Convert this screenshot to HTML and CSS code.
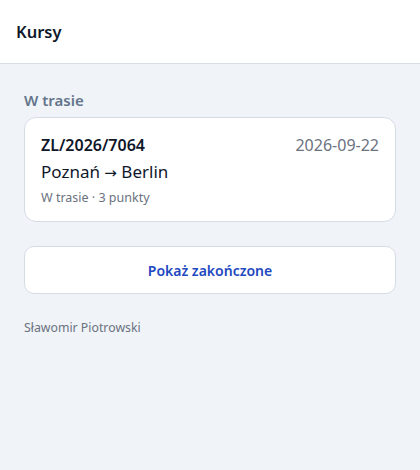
FILE: index.html
```html
<!DOCTYPE html>
<html lang="pl">
<head>
<meta charset="utf-8">
<link rel="stylesheet" href="styles.css">
</head>
<body>
<header class="topbar"><h1 class="title">Kursy</h1></header>
<main class="content">
  <h2 class="section-title">W trasie</h2>
  <div class="card">
    <div class="card-row">
      <span class="trip-id">ZL/2026/7064</span>
      <span class="trip-date">2026-09-22</span>
    </div>
    <div class="route">Poznań <span class="arrow">→</span> Berlin</div>
    <div class="meta">W trasie · 3 punkty</div>
  </div>
  <button class="show-btn">Pokaż zakończone</button>
  <p class="driver">Sławomir Piotrowski</p>
</main>
</body>
</html>
```
FILE: styles.css
```css
* { box-sizing: border-box; }
html, body { margin: 0; padding: 0; }
body {
  font-family: "Noto Sans", "Open Sans", sans-serif;
  background: #f0f4f8;
  color: #111827;
  min-height: 470px;
}
.topbar {
  height: 64px;
  background: #ffffff;
  border-bottom: 1px solid #d9dee5;
  display: flex;
  align-items: center;
  padding: 0 16px;
}
.title {
  margin: 0;
  font-size: 16.5px;
  font-weight: 600;
  color: #0f172a;
}
.content {
  padding: 24px 24px;
}
.section-title {
  margin: 0 0 5px;
  font-size: 15px;
  line-height: 24px;
  font-weight: 600;
  color: #64748b;
}
.card {
  background: #ffffff;
  border: 1px solid #d5dce6;
  border-radius: 12px;
  padding: 16px 16px 15px;
}
.card-row {
  display: flex;
  justify-content: space-between;
  align-items: baseline;
  line-height: 22px;
}
.trip-id {
  font-size: 16px;
  font-weight: 600;
  color: #0f172a;
}
.trip-date {
  font-size: 16px;
  color: #6b7280;
}
.route {
  margin-top: 4px;
  font-size: 17px;
  line-height: 24px;
  color: #0f172a;
}
.arrow {
  font-family: "DejaVu Sans", sans-serif;
  font-size: 15px;
}
.meta {
  margin-top: 4px;
  font-size: 12.5px;
  line-height: 17px;
  color: #6b7280;
}
.show-btn {
  display: block;
  width: 100%;
  height: 48px;
  margin: 24px 0 0;
  background: #ffffff;
  border: 1px solid #d5dce6;
  border-radius: 10px;
  font-family: inherit;
  font-size: 14px;
  font-weight: 600;
  color: #1e48c0;
}
.driver {
  margin: 25px 0 0;
  font-size: 12.3px;
  line-height: 18px;
  color: #6b7280;
}
```
